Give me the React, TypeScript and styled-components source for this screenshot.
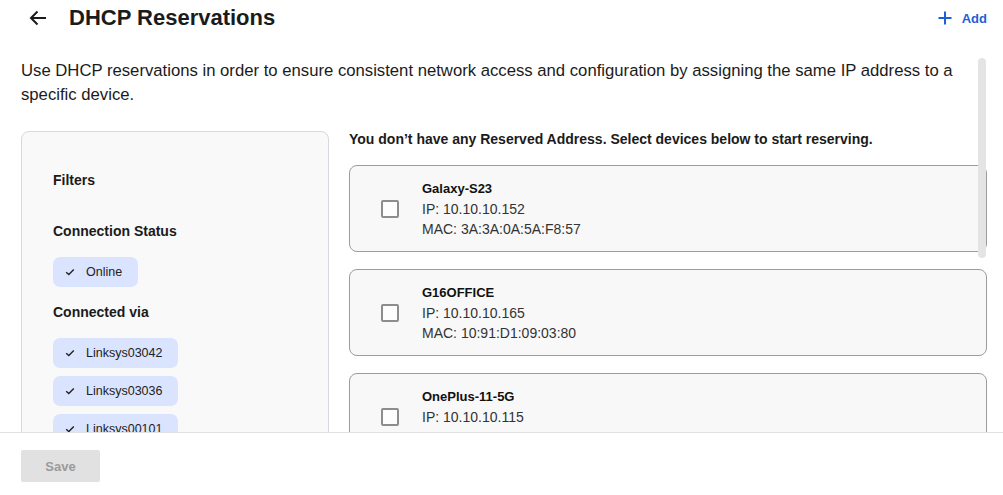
import styled, { createGlobalStyle } from "styled-components";

const GlobalStyle = createGlobalStyle`
    html, body {
        margin: 0;
        padding: 0;
        background: #ffffff;
        font-family: "Liberation Sans", Arial, sans-serif;
        color: #1b1b1b;
    }
`;

const Page = styled.div`
    width: 1003px;
    height: 495px;
    display: flex;
    flex-direction: column;
    overflow: hidden;
`;

const Header = styled.div`
    height: 36px;
    flex-shrink: 0;
    display: flex;
    align-items: center;
    padding: 0 16px 0 28px;
    .backButton {
        width: 20px;
        height: 20px;
        margin-right: 21px;
        display: flex;
    }
    .title {
        flex: 1;
        font-size: 22px;
        font-weight: bold;
    }
`;

const AddButton = styled.div`
    display: flex;
    align-items: center;
    gap: 10px;
    color: #1e5fd8;
    font-size: 13px;
    font-weight: bold;
    svg {
        width: 14px;
        height: 14px;
    }
`;

const ScrollArea = styled.div`
    position: relative;
    height: 377px;
    flex-shrink: 0;
    margin-top: 20px;
    padding: 3px 16px 0 21px;
    box-sizing: border-box;
    border-bottom: 1px solid #e2e2e2;
    overflow: hidden;
    .scrollThumb {
        position: absolute;
        right: 17px;
        top: 2px;
        width: 8px;
        height: 200px;
        border-radius: 4px;
        background: #e4e4e4;
    }
`;

const Description = styled.p`
    margin: 0;
    font-size: 16.7px;
    line-height: 24px;
    padding-right: 20px;
`;

const Columns = styled.div`
    display: flex;
    gap: 20px;
    margin-top: 24px;
`;

const FilterPanel = styled.div`
    width: 308px;
    height: 340px;
    box-sizing: border-box;
    flex-shrink: 0;
    border: 1px solid #d8d8de;
    border-radius: 8px;
    background: #f9f9f9;
    padding: 40px 31px;
`;

const FilterTitle = styled.div<{ gap: number }>`
    font-size: 14px;
    font-weight: bold;
    margin-bottom: ${props => props.gap}px;
`;

const ChipList = styled.div`
    display: flex;
    flex-direction: column;
    align-items: flex-start;
    gap: 8px;
    margin-bottom: 17px;
`;

const Chip = styled.div`
    height: 30px;
    flex-shrink: 0;
    display: flex;
    align-items: center;
    gap: 11px;
    padding: 0 16px 0 12px;
    border-radius: 7px;
    background: #dbe4fe;
    font-size: 12.5px;
    color: #222;
    svg {
        width: 10px;
        height: 10px;
    }
`;

const DeviceColumn = styled.div`
    flex: 1;
    display: flex;
    flex-direction: column;
    .listHeading {
        font-size: 14px;
        font-weight: bold;
        margin: 0 0 18px;
    }
`;

const DeviceCard = styled.div`
    height: 87px;
    box-sizing: border-box;
    flex-shrink: 0;
    margin-bottom: 17px;
    border: 1px solid #9b9ba0;
    border-radius: 8px;
    background: #f8f8f8;
    display: flex;
    align-items: center;
    padding: 0 0 0 31px;
    .info {
        margin-left: 23px;
        font-size: 14px;
        line-height: 20px;
        color: #333;
    }
    .name {
        font-size: 13px;
        font-weight: bold;
        color: #111;
    }
`;

const Checkbox = styled.div`
    width: 14px;
    height: 14px;
    border: 2px solid #8d8d8d;
    border-radius: 2px;
    background: #fdfdfd;
`;

const Footer = styled.div`
    flex-shrink: 0;
    padding: 17px 21px 13px;
    button {
        width: 79px;
        height: 32px;
        border: none;
        border-radius: 2px;
        background: #e1e1e1;
        color: #9a9a9a;
        font-family: inherit;
        font-size: 13px;
        font-weight: bold;
    }
`;

const CheckIcon = () => (
    <svg viewBox="0 0 10 10" fill="none" stroke="#222" strokeWidth="1.4">
        <path d="M1.2 5.2 L3.8 7.6 L8.8 2.4" />
    </svg>
);

const devices = [
    { name: "Galaxy-S23", ip: "10.10.10.152", mac: "3A:3A:0A:5A:F8:57" },
    { name: "G16OFFICE", ip: "10.10.10.165", mac: "10:91:D1:09:03:80" },
    { name: "OnePlus-11-5G", ip: "10.10.10.115", mac: "02:0B:BC:0C:E0:B7" },
];

const routers = ["Linksys03042", "Linksys03036", "Linksys00101"];

const App = () => {
    return (
        <Page>
            <GlobalStyle />
            <Header>
                <div className="backButton">
                    <svg viewBox="0 0 20 20" fill="none" stroke="#1b1b1b" strokeWidth="2">
                        <path d="M18 10 H3 M9.5 3.5 L3 10 L9.5 16.5" />
                    </svg>
                </div>
                <div className="title">DHCP Reservations</div>
                <AddButton>
                    <svg viewBox="0 0 14 14" fill="none" stroke="#1e5fd8" strokeWidth="2">
                        <path d="M7 0.5 V13.5 M0.5 7 H13.5" />
                    </svg>
                    Add
                </AddButton>
            </Header>
            <ScrollArea>
                <Description>
                    Use DHCP reservations in order to ensure consistent network access and configuration by assigning the same IP address to a specific device.
                </Description>
                <Columns>
                    <FilterPanel>
                        <FilterTitle gap={35}>Filters</FilterTitle>
                        <FilterTitle gap={18}>Connection Status</FilterTitle>
                        <ChipList>
                            <Chip><CheckIcon />Online</Chip>
                        </ChipList>
                        <FilterTitle gap={18}>Connected via</FilterTitle>
                        <ChipList>
                            {routers.map(r => (
                                <Chip key={r}><CheckIcon />{r}</Chip>
                            ))}
                        </ChipList>
                    </FilterPanel>
                    <DeviceColumn>
                        <div className="listHeading">
                            You don’t have any Reserved Address. Select devices below to start reserving.
                        </div>
                        {devices.map(d => (
                            <DeviceCard key={d.name}>
                                <Checkbox />
                                <div className="info">
                                    <div className="name">{d.name}</div>
                                    <div>IP: {d.ip}</div>
                                    <div>MAC: {d.mac}</div>
                                </div>
                            </DeviceCard>
                        ))}
                    </DeviceColumn>
                </Columns>
                <div className="scrollThumb" />
            </ScrollArea>
            <Footer>
                <button>Save</button>
            </Footer>
        </Page>
    );
};

export default App;
